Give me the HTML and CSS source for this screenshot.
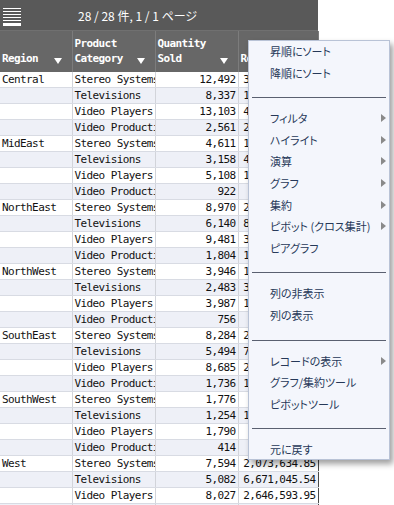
FILE: index.html
```html
<!DOCTYPE html>
<html lang="ja">
<head>
<meta charset="utf-8">
<title>Report</title>
<link rel="stylesheet" href="styles.css">
</head>
<body>
<div class="topbar">
  <svg class="burger" width="18" height="21" viewBox="0 0 18 21">
    <rect x="0" y="3" width="18" height="1" fill="#fff"/>
    <rect x="0" y="6" width="18" height="1" fill="#fff"/>
    <rect x="0" y="9" width="18" height="1" fill="#fff"/>
    <rect x="0" y="12" width="18" height="1" fill="#fff"/>
    <rect x="0" y="15" width="18" height="1" fill="#fff"/>
    <rect x="0" y="18" width="18" height="3" fill="#fff"/>
  </svg>
  <span class="title">28 / 28 件, 1 / 1 ページ</span>
</div>
<table class="grid">
  <colgroup><col class="c1"><col class="c2"><col class="c3"><col class="c4"></colgroup>
  <thead>
    <tr>
      <th><div class="hc"><span>Region</span><i class="sort"></i></div></th>
      <th><div class="hc"><span>Product<br>Category</span><i class="sort"></i></div></th>
      <th><div class="hc"><span>Quantity<br>Sold</span><i class="sort"></i></div></th>
      <th><div class="hc"><span>Revenue</span></div></th>
    </tr>
  </thead>
  <tbody>
    <tr><td>Central</td><td>Stereo Systems</td><td class="n">12,492</td><td class="n">3,293,115.63</td></tr>
    <tr><td></td><td>Televisions</td><td class="n">8,337</td><td class="n">1,587,242.12</td></tr>
    <tr><td></td><td>Video Players</td><td class="n">13,103</td><td class="n">4,352,981.07</td></tr>
    <tr><td></td><td>Video Production</td><td class="n">2,561</td><td class="n">2,305,433.41</td></tr>
    <tr><td>MidEast</td><td>Stereo Systems</td><td class="n">4,611</td><td class="n">1,297,662.54</td></tr>
    <tr><td></td><td>Televisions</td><td class="n">3,158</td><td class="n">4,034,890.00</td></tr>
    <tr><td></td><td>Video Players</td><td class="n">5,108</td><td class="n">1,623,118.28</td></tr>
    <tr><td></td><td>Video Production</td><td class="n">922</td><td class="n">695,231.96</td></tr>
    <tr><td>NorthEast</td><td>Stereo Systems</td><td class="n">8,970</td><td class="n">2,717,802.39</td></tr>
    <tr><td></td><td>Televisions</td><td class="n">6,140</td><td class="n">8,076,124.87</td></tr>
    <tr><td></td><td>Video Players</td><td class="n">9,481</td><td class="n">3,011,742.13</td></tr>
    <tr><td></td><td>Video Production</td><td class="n">1,804</td><td class="n">1,433,605.22</td></tr>
    <tr><td>NorthWest</td><td>Stereo Systems</td><td class="n">3,946</td><td class="n">1,177,380.84</td></tr>
    <tr><td></td><td>Televisions</td><td class="n">2,483</td><td class="n">3,260,441.09</td></tr>
    <tr><td></td><td>Video Players</td><td class="n">3,987</td><td class="n">1,256,713.55</td></tr>
    <tr><td></td><td>Video Production</td><td class="n">756</td><td class="n">573,109.72</td></tr>
    <tr><td>SouthEast</td><td>Stereo Systems</td><td class="n">8,284</td><td class="n">2,553,986.47</td></tr>
    <tr><td></td><td>Televisions</td><td class="n">5,494</td><td class="n">7,192,551.80</td></tr>
    <tr><td></td><td>Video Players</td><td class="n">8,685</td><td class="n">2,788,452.11</td></tr>
    <tr><td></td><td>Video Production</td><td class="n">1,736</td><td class="n">1,380,064.29</td></tr>
    <tr><td>SouthWest</td><td>Stereo Systems</td><td class="n">1,776</td><td class="n">538,512.76</td></tr>
    <tr><td></td><td>Televisions</td><td class="n">1,254</td><td class="n">1,640,336.68</td></tr>
    <tr><td></td><td>Video Players</td><td class="n">1,790</td><td class="n">561,248.30</td></tr>
    <tr><td></td><td>Video Production</td><td class="n">414</td><td class="n">316,822.14</td></tr>
    <tr><td>West</td><td>Stereo Systems</td><td class="n">7,594</td><td class="n">2,073,634.85</td></tr>
    <tr><td></td><td>Televisions</td><td class="n">5,082</td><td class="n">6,671,045.54</td></tr>
    <tr><td></td><td>Video Players</td><td class="n">8,027</td><td class="n">2,646,593.95</td></tr>
    <tr><td></td><td>Video Production</td><td class="n">1,263</td><td class="n">1,263,477.18</td></tr>
  </tbody>
</table>
<div class="menu">
  <div class="item">昇順にソート</div>
  <div class="item">降順にソート</div>
  <div class="sep"></div>
  <div class="item sub">フィルタ</div>
  <div class="item sub">ハイライト</div>
  <div class="item sub">演算</div>
  <div class="item sub">グラフ</div>
  <div class="item sub">集約</div>
  <div class="item sub">ピボット (クロス集計)</div>
  <div class="item">ピアグラフ</div>
  <div class="sep"></div>
  <div class="item">列の非表示</div>
  <div class="item">列の表示</div>
  <div class="sep"></div>
  <div class="item sub">レコードの表示</div>
  <div class="item">グラフ/集約ツール</div>
  <div class="item">ピボットツール</div>
  <div class="sep"></div>
  <div class="item">元に戻す</div>
</div>
</body>
</html>
```
FILE: styles.css
```css
html, body {
  margin: 0;
  padding: 0;
  background: #fff;
  overflow: hidden;
}
body {
  width: 394px;
  height: 505px;
  position: relative;
  font-family: "DejaVu Sans Mono", monospace;
}
.topbar {
  height: 30px;
  background: #595959;
  border-bottom: 1px solid #707070;
  display: flex;
  align-items: center;
  width: 318px;
}
.burger {
  margin-left: 3px;
  margin-top: 1px;
  display: block;
}
.title {
  margin-left: 57px;
  color: #fff;
  font-family: "Noto Sans CJK JP", sans-serif;
  font-size: 12px;
  font-feature-settings: "palt";
}
.grid {
  border-collapse: collapse;
  table-layout: fixed;
  width: 318px;
  font-size: 11px;
  letter-spacing: -0.6px;
}
.c1 { width: 72px; }
.c2 { width: 83px; }
.c3 { width: 83px; }
.c4 { width: 80px; }
.grid th {
  background: #676767;
  color: #fff;
  height: 41px;
  padding: 0;
  border-right: 1px solid #7c7c7c;
  vertical-align: bottom;
  text-align: left;
  font-weight: bold;
}
.hc {
  display: flex;
  align-items: flex-end;
  justify-content: space-between;
  padding: 0 10px 6px 2px;
  line-height: 15px;
}
.sort {
  width: 0;
  height: 0;
  border-left: 4px solid transparent;
  border-right: 4px solid transparent;
  border-top: 6px solid #fff;
  margin-bottom: 2px;
}
.grid td {
  height: 14px;
  padding: 1px 2px 0 2px;
  line-height: 14px;
  border-bottom: 1px solid #d8dbe3;
  border-right: 1px solid #d2d4da;
  white-space: nowrap;
  overflow: hidden;
  color: #111;
}
.grid td:last-child {
  border-right: 1px solid #4a4a4a;
}
.grid tbody tr:nth-child(even) td {
  background: #eef0f7;
}
.grid td.n {
  text-align: right;
}
.menu {
  position: absolute;
  left: 248px;
  top: 40px;
  width: 140px;
  height: 418px;
  background: #f4f6fc;
  border: 1px solid #b9c3d6;
  box-shadow: 3px 4px 6px rgba(0, 0, 0, 0.38);
  font-family: "Noto Sans CJK JP", sans-serif;
  font-size: 11px;
  font-feature-settings: "palt";
  color: #263858;
}
.item {
  height: 21.6px;
  line-height: 21.6px;
  padding-left: 21px;
  position: relative;
  white-space: nowrap;
}
.item.sub::after {
  content: "";
  position: absolute;
  left: 132px;
  top: 6px;
  width: 0;
  height: 0;
  border-top: 4.5px solid transparent;
  border-bottom: 4.5px solid transparent;
  border-left: 5px solid #8a8a8a;
}
.sep {
  height: 1px;
  margin: 13px 3px 10px 3px;
  background: #5a6070;
}
```
